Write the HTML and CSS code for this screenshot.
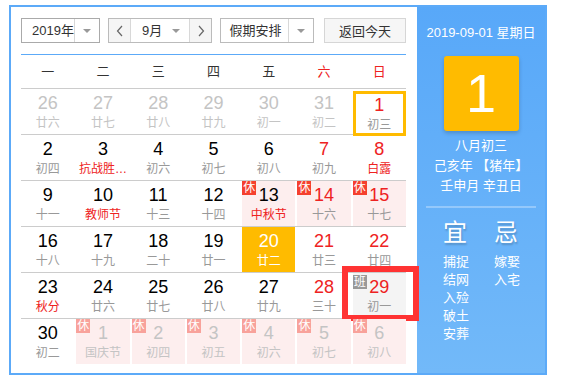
FILE: index.html
```html
<!DOCTYPE html>
<html lang="zh-CN">
<head>
  <meta charset="UTF-8">
  <meta name="viewport" content="width=device-width, initial-scale=1">
  <title>万年历</title>
  <link rel="stylesheet" href="styles.css">
</head>
<body>

  <div class="calendar">
    <div class="main">
      <div class="toolbar">
        <div class="select year">
          <span class="value">2019年</span>
          <span class="arrow"><i class="tri"></i></span>
        </div>
        <div class="select month">
          <span class="nav prev">
            <svg width="8" height="12" viewBox="0 0 8 12"><polyline points="6,1 1.5,6 6,11" fill="none" stroke="#666" stroke-width="1.2"/></svg>
          </span>
          <span class="value">9月<i class="tri"></i></span>
          <span class="nav next">
            <svg width="8" height="12" viewBox="0 0 8 12"><polyline points="2,1 6.5,6 2,11" fill="none" stroke="#666" stroke-width="1.2"/></svg>
          </span>
        </div>
        <div class="select holiday">
          <span class="value">假期安排</span>
          <span class="arrow"><i class="tri"></i></span>
        </div>
        <button class="today-btn">返回今天</button>
      </div>

      <div class="week-head">
        <span>一</span><span>二</span><span>三</span><span>四</span><span>五</span>
        <span class="red">六</span><span class="red">日</span>
      </div>

      <div class="days">
        <div class="row">
          <div class="day other"><b>26</b><em>廿六</em></div>
          <div class="day other"><b>27</b><em>廿七</em></div>
          <div class="day other"><b>28</b><em>廿八</em></div>
          <div class="day other"><b>29</b><em>廿九</em></div>
          <div class="day other"><b>30</b><em>初一</em></div>
          <div class="day other"><b>31</b><em>初二</em></div>
          <div class="day today"><b class="red">1</b><em>初三</em></div>
        </div>
        <div class="row">
          <div class="day"><b>2</b><em>初四</em></div>
          <div class="day"><b>3</b><em class="fest">抗战胜…</em></div>
          <div class="day"><b>4</b><em>初六</em></div>
          <div class="day"><b>5</b><em>初七</em></div>
          <div class="day"><b>6</b><em>初八</em></div>
          <div class="day"><b class="red">7</b><em>初九</em></div>
          <div class="day"><b class="red">8</b><em class="fest">白露</em></div>
        </div>
        <div class="row">
          <div class="day"><b>9</b><em>十一</em></div>
          <div class="day"><b>10</b><em class="fest">教师节</em></div>
          <div class="day"><b>11</b><em>十三</em></div>
          <div class="day"><b>12</b><em>十四</em></div>
          <div class="day rest"><span class="tag">休</span><b>13</b><em class="fest">中秋节</em></div>
          <div class="day rest"><span class="tag">休</span><b class="red">14</b><em>十六</em></div>
          <div class="day rest"><span class="tag">休</span><b class="red">15</b><em>十七</em></div>
        </div>
        <div class="row">
          <div class="day"><b>16</b><em>十八</em></div>
          <div class="day"><b>17</b><em>十九</em></div>
          <div class="day"><b>18</b><em>二十</em></div>
          <div class="day"><b>19</b><em>廿一</em></div>
          <div class="day picked"><b>20</b><em>廿二</em></div>
          <div class="day"><b class="red">21</b><em>廿三</em></div>
          <div class="day"><b class="red">22</b><em>廿四</em></div>
        </div>
        <div class="row">
          <div class="day"><b>23</b><em class="fest">秋分</em></div>
          <div class="day"><b>24</b><em>廿六</em></div>
          <div class="day"><b>25</b><em>廿七</em></div>
          <div class="day"><b>26</b><em>廿八</em></div>
          <div class="day"><b>27</b><em>廿九</em></div>
          <div class="day"><b class="red">28</b><em>三十</em></div>
          <div class="day work"><span class="mark"></span><span class="tag">班</span><b class="red">29</b><em>初一</em></div>
        </div>
        <div class="row">
          <div class="day"><b>30</b><em>初二</em></div>
          <div class="day other rest"><span class="tag">休</span><b>1</b><em>国庆节</em></div>
          <div class="day other rest"><span class="tag">休</span><b>2</b><em>初四</em></div>
          <div class="day other rest"><span class="tag">休</span><b>3</b><em>初五</em></div>
          <div class="day other rest"><span class="tag">休</span><b>4</b><em>初六</em></div>
          <div class="day other rest"><span class="tag">休</span><b>5</b><em>初七</em></div>
          <div class="day other rest"><span class="tag">休</span><b>6</b><em>初八</em></div>
        </div>
      </div>
    </div>

    <div class="side">
      <div class="side-date">2019-09-01 星期日</div>
      <div class="big-day">1</div>
      <div class="lunar-info">
        <p>八月初三</p>
        <p>己亥年 【猪年】</p>
        <p>壬申月 辛丑日</p>
      </div>
      <div class="yiji">
        <div class="col">
          <h3>宜</h3>
          <p>捕捉</p><p>结网</p><p>入殓</p><p>破土</p><p>安葬</p>
        </div>
        <div class="col">
          <h3>忌</h3>
          <p>嫁娶</p><p>入宅</p>
        </div>
      </div>
    </div>
  </div>

</body>
</html>
```

FILE: styles.css
```css
body {
  margin: 0;
  font-family: "Liberation Sans", "Noto Sans CJK SC", sans-serif;
  background: #fff;
  color: #333;
}
.calendar {
  display: flex;
  width: 534px;
  height: 366px;
  margin: 5px 0 0 9px;
  border: 2px solid #5caaf8;
}
.main {
  width: 385px;
  padding: 11px 11px 0 10px;
}

/* toolbar */
.toolbar {
  display: flex;
  gap: 8px;
  height: 25px;
}
.select {
  display: flex;
  height: 25px;
  box-sizing: border-box;
  border: 1px solid #aaa;
  font-size: 13px;
  line-height: 23px;
  color: #333;
}
.select .value {
  flex: 1;
  text-align: center;
  position: relative;
  white-space: nowrap;
}
.select .arrow {
  width: 24px;
  border-left: 1px solid #d8d8d8;
  display: flex;
  align-items: center;
  justify-content: center;
}
.tri {
  display: inline-block;
  width: 0;
  height: 0;
  border-left: 4px solid transparent;
  border-right: 4px solid transparent;
  border-top: 4px solid #999;
}
.year {
  width: 79px;
}
.year .value {
  text-align: left;
  padding-left: 10px;
}
.month {
  width: 104px;
  border-color: #bbb;
}
.month .nav {
  width: 21px;
  background: #f5f5f5;
  display: flex;
  align-items: center;
  justify-content: center;
}
.month .prev {
  border-right: 1px solid #d8d8d8;
}
.month .next {
  border-left: 1px solid #d8d8d8;
}
.month .value {
  text-align: left;
  padding-left: 11px;
}
.month .value .tri {
  position: absolute;
  right: 9px;
  top: 10px;
}
.holiday {
  width: 94px;
  border-color: #bbb;
}
.holiday .value {
  padding-left: 2px;
}
.today-btn {
  margin-left: auto;
  width: 82px;
  height: 25px;
  padding: 0;
  border: 1px solid #d6d6d6;
  background: #f6f6f6;
  font-family: inherit;
  font-size: 13px;
  color: #333;
}

/* week header */
.week-head {
  display: grid;
  grid-template-columns: repeat(7, 1fr);
  column-gap: 2px;
  margin-top: 11px;
  height: 33px;
  border-top: 1px solid #5caaf8;
  border-bottom: 1px solid #ccc;
  font-size: 13px;
  line-height: 33px;
  text-align: center;
  color: #333;
}
.red {
  color: #e22 !important;
}

/* days */
.row {
  display: grid;
  grid-template-columns: repeat(7, 1fr);
  column-gap: 2px;
  height: 45px;
  border-top: 1px solid #ccc;
}
.row:first-child {
  border-top: none;
}
.day {
  position: relative;
  box-sizing: border-box;
  padding-top: 4px;
  text-align: center;
}
.day b {
  display: block;
  font-weight: normal;
  font-size: 18px;
  line-height: 20px;
  color: #000;
}
.day em {
  display: block;
  margin-top: 2px;
  font-style: normal;
  font-size: 12px;
  line-height: 16px;
  color: #999;
  white-space: nowrap;
}
.day em.fest {
  color: #e22;
}
.day.other b {
  color: #c4c4c4;
}
.day.other em {
  color: #c4c4c4;
}
.day.rest {
  background: #fdeeee;
}
.tag {
  position: absolute;
  left: 0;
  top: 0;
  width: 14px;
  height: 14px;
  background: #f5402e;
  color: #fff;
  font-size: 12px;
  line-height: 14px;
  text-align: center;
}
.day.other .tag {
  background: #f8a29b;
}
.day.today {
  border: 3px solid #ffbb00;
  margin-top: 2px;
  padding-top: 1px;
}
.day.picked {
  background: #ffbb00;
}
.day.picked b,
.day.picked em {
  color: #fff;
}
.day.work {
  background: #f4f4f4;
}
.day.work .tag {
  top: 2px;
  background: #999;
}
.mark {
  position: absolute;
  left: -11px;
  top: -7px;
  width: 65px;
  height: 43px;
  border: 6px solid #ff3333;
}

/* side panel */
.side {
  width: 128px;
  background: linear-gradient(#58a8f9, #72b9f9);
  color: #fff;
  text-align: center;
  padding-top: 16px;
}
.side-date {
  font-size: 13px;
  line-height: 20px;
}
.big-day {
  width: 75px;
  height: 75px;
  margin: 13px auto 0;
  background: #ffbb00;
  border-radius: 3px;
  box-shadow: 0 2px 4px rgba(0, 0, 0, 0.2);
  font-size: 54px;
  line-height: 75px;
}
.lunar-info {
  margin-top: 5px;
  padding-bottom: 10px;
  border-bottom: 2px solid rgba(255, 255, 255, 0.3);
  width: 110px;
  margin-left: auto;
  margin-right: auto;
}
.lunar-info p {
  margin: 0;
  font-size: 13px;
  line-height: 20px;
}
.yiji {
  display: flex;
  padding-left: 26px;
  margin-top: 11px;
  text-align: left;
}
.yiji .col {
  width: 55px;
}
.yiji h3 {
  margin: 0 0 6px;
  font-size: 24px;
  line-height: 28px;
  font-weight: normal;
  text-shadow: 1px 2px 2px rgba(0, 0, 0, 0.2);
}
.yiji p {
  margin: 0;
  font-size: 13px;
  line-height: 18px;
}
```
